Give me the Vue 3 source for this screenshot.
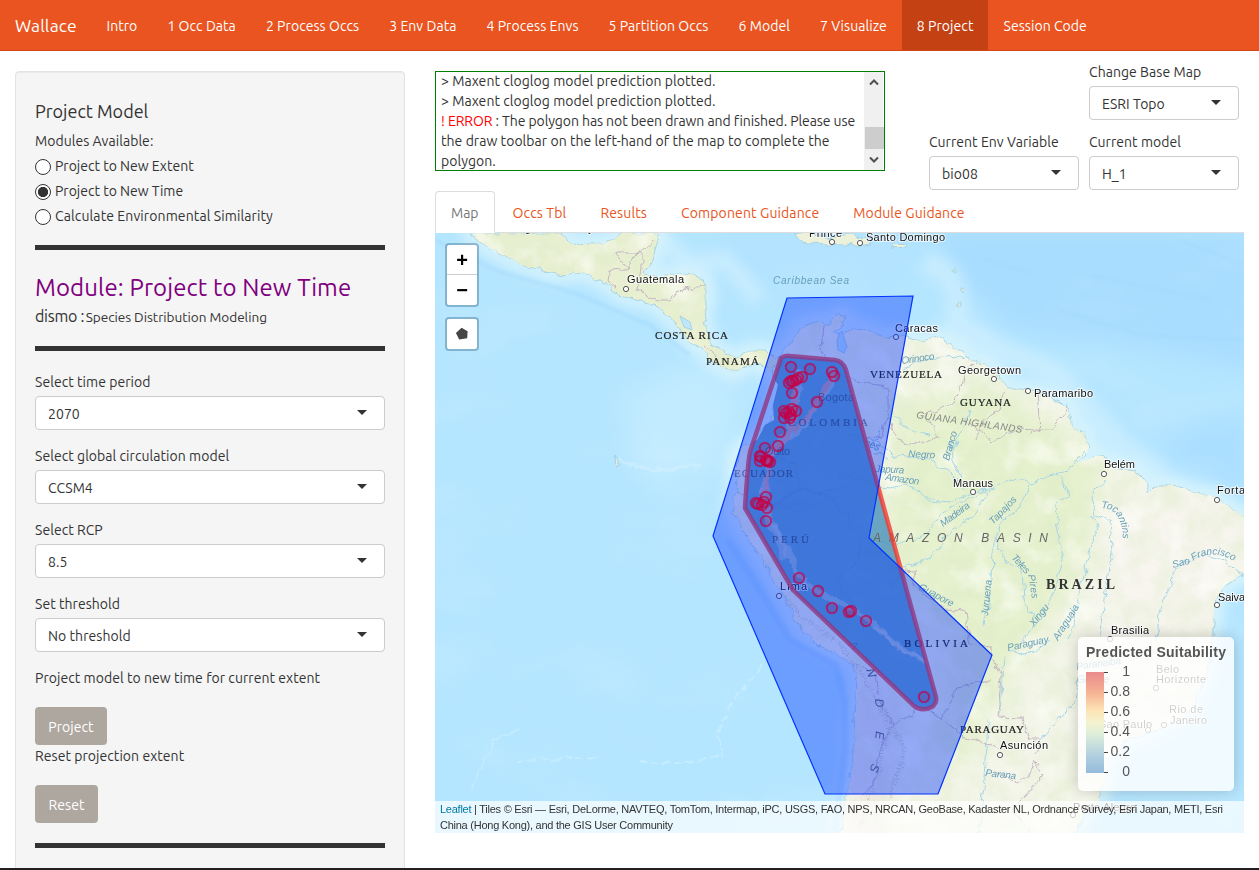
<script setup>
const navItems = ['Intro', '1 Occ Data', '2 Process Occs', '3 Env Data', '4 Process Envs', '5 Partition Occs', '6 Model', '7 Visualize', '8 Project', 'Session Code']
const modules = ['Project to New Extent', 'Project to New Time', 'Calculate Environmental Similarity']
const fields = [
  { label: 'Select time period', value: '2070' },
  { label: 'Select global circulation model', value: 'CCSM4' },
  { label: 'Select RCP', value: '8.5' },
  { label: 'Set threshold', value: 'No threshold' },
]
const tabs = ['Map', 'Occs Tbl', 'Results', 'Component Guidance', 'Module Guidance']
const legend = ['1', '0.8', '0.6', '0.4', '0.2', '0']

const northLand = 'M470 233L482 243L495 252L520 264L545 272L565 275L573 271L590 275L608 285L620 295L640 301L655 304L662 311L676 323L683 333L690 343L702 348L708 358L722 368L735 374L742 368L755 362L765 366L772 375L781 355L775 360L765 350L752 350L735 357L722 352L712 345L707 338L705 325L703 315L707 300L707 284L695 275L680 274L665 275L650 277L645 272L652 260L658 240L659 233L620 233L612 240L600 243L580 245L566 240L562 233Z'
const southLand = 'M781 355L790 345L796 335L800 328L815 322L828 324L838 316L845 316L843 322L833 331L840 336L855 327L870 331L885 337L900 336L915 341L940 338L953 348L963 352L965 358L985 364L1003 381L1008 388L1030 390L1050 397L1070 410L1072 425L1087 436L1089 450L1076 463L1098 455L1120 468L1135 470L1148 485L1147 495L1155 487L1170 484L1190 491L1215 496L1233 510L1250 518L1250 570L1225 585L1215 600L1212 633L1210 665L1200 690L1190 710L1175 722L1150 732L1125 742L1105 765L1105 780L1098 800L1085 815L1070 840L840 840L845 800L852 770L855 720L857 680L853 665L838 655L815 642L800 630L790 610L780 590L765 565L753 545L740 525L733 510L733 500L738 490L735 470L737 455L745 445L757 440L765 425L774 420L773 405L778 385L772 375Z'
const hull = 'M781 358Q785 355 790 356L835 360Q843 361 846 370L936 697Q937 703 932 707Q922 712 914 706L793 590L745 508Q748 460 750 452Z'
const area = 'M787 298L913 296L869 538L992 655L938 794L825 794L713 536Z'

const rivers = [
  'M876 485L890 488L905 484L918 490L930 500L950 502L973 492L995 488L1015 480L1032 484L1050 476L1065 472L1075 463L1085 450',
  'M870 437L895 455L925 458L944 468L955 478L965 490', 'M952 440L953 462L960 478',
  'M890 460L870 450L888 415', 'M913 542L930 530L940 515L962 502L988 489', 'M895 570L922 562L940 548L945 535L975 515L990 490',
  'M1029 486L1018 510L1000 525L993 548L992 580L988 605L985 624', 'M996 540L1005 560L1022 572L1024 600L1036 622',
  'M1062 475L1068 495L1056 505L1058 530L1063 560L1055 590L1040 620L1020 645', 'M1092 515L1099 525L1088 560L1078 600L1069 640',
  'M1105 478L1092 495L1095 515L1110 520L1112 545L1106 590L1100 640', 'M1243 576L1222 559L1205 555L1180 565L1165 595L1155 640',
  'M1008 650L1020 655L1035 650L1050 641', 'M1080 676L1075 700L1052 728L1038 744', 'M988 720L985 780L978 833',
  'M902 368L930 360L950 355L963 360', 'M890 410L905 427L930 435', 'M970 410L963 430L952 450', 'M1004 657L1002 680L1000 715',
  'M870 538L890 545L905 542', 'M848 433L872 441L882 456', 'M795 490L820 493L850 486', 'M770 502L795 512L820 500'
]
const borders = [
  'M609 271L625 270L638 252L642 252L642 270L637 288L650 297L659 300L669 300L680 290L695 287L707 284', 'M609 271L608 282L615 288', 'M615 252L640 252M615 252L628 268M640 252L650 245L652 240',
  'M706 348L714 352L718 358', 'M783 355L778 367L780 373', 'M825 325L820 350L845 377L862 383L888 388L888 410L883 435L860 440',
  'M889 415L898 440L915 445L938 435L925 415L950 405L958 395L965 372L975 362', 'M1005 390L1000 410L985 420L975 440', 'M1037 393L1040 430L1030 432', 'M1068 409L1050 430L1020 428L990 443L970 420',
  'M755 447L795 465L800 485', 'M738 493L760 510L780 502L800 488L830 497L845 515L862 540L855 565L835 580L852 600L865 630', 'M904 569L914 570L915 585L945 610L965 612L970 645L992 646L992 655L1001 675L998 717L1022 718L1030 740L1040 740L1036 755',
  'M857 665L876 675L882 710L892 724L925 707L942 718L957 687L990 681', 'M942 718L963 737L990 745L1000 752M997 773L1016 783L1030 775L1035 760L1044 775L1020 800L1012 810L1030 833',
  'M892 724L887 738L877 763L873 785L864 795'
]
const cities = [
  ['Guatemala', 627, 283, 57, 626, 289], ['Santo Domingo', 866, 241, 79, 860, 243], ['Prince', 809, 237, 33, 832, 242],
  ['Caracas', 895, 332, 43, 896, 337], ['Georgetown', 958, 374, 63, 994, 379], ['Paramaribo', 1034, 397, 59, 1028, 391],
  ['Belém', 1104, 468, 31, 1104, 474], ['Manaus', 953, 487, 40, 973, 492], ['Forta', 1217, 494, 28, 1217, 500],
  ['Salva', 1218, 601, 27, 1217, 605], ['Brasilia', 1111, 634, 38, 1110, 639], ['Asunción', 1000, 749, 48, 1000, 755],
  ['Lima', 780, 590, 27, 779, 596], ['Belo', 1156, 673, 23, 1156, 688], ['Horizonte', 1156, 683, 50, 1156, 688],
  ['Rio de', 1169, 713, 34, 1164, 725], ['Janeiro', 1170, 724, 37, 1164, 725], ['Sao Paulo', 1099, 728, 53, 1148, 730],
  ['Porto Alegre', 1073, 811, 63, 1073, 815]
]
const countries = [
  ['COSTA RICA', 655, 339, 73], ['PANAMÁ', 706, 365, 53], ['VENEZUELA', 870, 378, 72], ['GUYANA', 960, 406, 51], ['COLOMBIA', 788, 426, 80],
  ['ECUADOR', 734, 477, 59], ['PERÚ', 772, 543, 37], ['BOLIVIA', 904, 647, 64], ['PARAGUAY', 960, 733, 64]
]
const waters = [
  ['Caribbean Sea', 773, 284, 76, 0], ['Orinoco', 902, 364, 33, -8], ['Negro', 908, 457, 27, 3], ['Japura', 875, 472, 29, 3], ['Amazon', 885, 480, 34, 8],
  ['Madeira', 943, 527, 34, -36], ['Tapajos', 993, 525, 35, -46], ['Branco', 949, 461, 30, -74], ['Teles', 1011, 558, 22, 48], ['Pires', 1028, 575, 24, 80], ['Juruena', 988, 616, 36, -84],
  ['Xingu', 1034, 627, 25, -52], ['Araguaia', 1058, 641, 40, -58], ['Sao', 1173, 568, 18, -14],
  ['Guapore', 918, 589, 38, 28], ['Purus', 857, 556, 25, -4], ['Beni', 892, 589, 22, -48], ['Marañon', 775, 510, 34, -8], ['Vaupes', 847, 438, 34, 22], ['Putumayo', 837, 476, 43, 14],
  ['Parana', 985, 776, 31, 6], ['Paraguay', 1008, 651, 42, -12], ['Paranaiba', 1077, 670, 45, -8], ['Grande', 1077, 683, 32, 0]
]
const occs = [
  [791, 367], [810, 369], [832, 372], [834, 376], [789, 383], [793, 381], [796, 380], [802, 377], [798, 378], [791, 381], [792, 393], [817, 402],
  [784, 411], [786, 413], [791, 415], [796, 411], [789, 412], [792, 409], [784, 418], [790, 418], [780, 432], [765, 448], [778, 446], [760, 456], [761, 457], [766, 460], [767, 461], [768, 461],
  [760, 461], [770, 462], [766, 497], [756, 503], [758, 504], [762, 505], [767, 508], [764, 502], [766, 521], [799, 578], [818, 591], [832, 608], [849, 612], [851, 611], [866, 621], [924, 697]
]
</script>

<template>
  <div class="page">
    <nav class="navbar">
      <span class="brand">Wallace</span>
      <a v-for="n in navItems" :key="n" :class="['nav-link', { active: n === '8 Project' }]">{{ n }}</a>
    </nav>
    <div class="body">
      <aside class="well">
        <h4>Project Model</h4>
        <div class="avail">Modules Available:</div>
        <div v-for="(m, i) in modules" :key="m" class="radio">
          <span :class="['dot', { on: i === 1 }]"></span><span :class="{ wide: i === 2 }">{{ m }}</span>
        </div>
        <hr class="hr1">
        <h3>Module: Project to New Time</h3>
        <div class="pkg"><span>dismo :</span> <small>Species Distribution Modeling</small></div>
        <hr class="hr2">
        <div v-for="f in fields" :key="f.label" class="field">
          <label>{{ f.label }}</label>
          <div class="select"><span>{{ f.value }}</span><i></i></div>
        </div>
        <div class="help">Project model to new time for current extent</div>
        <button class="b1">Project</button>
        <div class="help2">Reset projection extent</div>
        <button class="b2">Reset</button>
        <hr class="hr3">
      </aside>

      <main>
        <div class="top">
          <div class="log">
            <div class="log-text">
              <p>&gt; Maxent cloglog model prediction plotted.</p>
              <p>&gt; Maxent cloglog model prediction plotted.</p>
              <p class="l3"><b>! ERROR</b> : The polygon has not been drawn and finished. Please use</p>
              <p>the draw toolbar on the left-hand of the map to complete the</p>
              <p>polygon.</p>
            </div>
            <div class="scroll">
              <svg width="10" height="8" viewBox="0 0 10 8"><path d="M1 6.5L5 2.5L9 6.5" /></svg>
              <div class="thumb"></div>
              <svg width="10" height="8" viewBox="0 0 10 8"><path d="M1 1.5L5 5.5L9 1.5" /></svg>
            </div>
          </div>
          <div class="pickers">
            <div class="field base"><label>Change Base Map</label><div class="select"><span>ESRI Topo</span><i></i></div></div>
            <div class="field"><label>Current Env Variable</label><div class="select"><span>bio08</span><i></i></div></div>
            <div class="field"><label>Current model</label><div class="select"><span>H_1</span><i></i></div></div>
          </div>
        </div>
        <div class="tabs">
          <a v-for="(t, i) in tabs" :key="t" :class="['tab', { current: i === 0 }]">{{ t }}</a>
        </div>
        <div class="map">
          <svg class="canvas" width="809" height="600" viewBox="435 233 809 600">
            <defs>
              <clipPath id="land"><path :d="northLand" /><path :d="southLand" /></clipPath>
              <clipPath id="sland"><path :d="southLand" /></clipPath>
              <clipPath id="hullclip"><path :d="hull" /></clipPath>
              <filter id="blur6" x="-20%" y="-20%" width="140%" height="140%"><feGaussianBlur stdDeviation="6" /></filter>
              <filter id="blur2" x="-20%" y="-20%" width="140%" height="140%"><feGaussianBlur stdDeviation="1.4" /></filter>
              <filter id="blur14" x="-50%" y="-50%" width="200%" height="200%"><feGaussianBlur stdDeviation="13" /></filter>
              <filter id="green" x="0" y="0" width="100%" height="100%">
                <feTurbulence type="fractalNoise" baseFrequency="0.045" numOctaves="5" seed="7" />
                <feColorMatrix values="0 0 0 0 .7  0 0 0 0 .82  0 0 0 0 .55  2.8 0 0 0 -1.05" />
              </filter>
              <filter id="pale" x="0" y="0" width="100%" height="100%">
                <feTurbulence type="fractalNoise" baseFrequency="0.03" numOctaves="4" seed="23" />
                <feColorMatrix values="0 0 0 0 1  0 0 0 0 1  0 0 0 0 .97  3 0 0 0 -1.5" />
              </filter>
              <filter id="sea" x="0" y="0" width="100%" height="100%">
                <feTurbulence type="fractalNoise" baseFrequency="0.008 0.014" numOctaves="4" seed="12" />
                <feColorMatrix values="0 0 0 0 .85  0 0 0 0 .95  0 0 0 0 1  2 0 0 0 -1" />
              </filter>
              <filter id="rough" x="-5%" y="-5%" width="110%" height="110%">
                <feTurbulence type="fractalNoise" baseFrequency="0.09" numOctaves="3" seed="4" result="n" />
                <feDisplacementMap in="SourceGraphic" in2="n" scale="9" xChannelSelector="R" yChannelSelector="G" />
              </filter>
              <path id="tocantins" d="M1101 508Q1116 508 1120 522Q1125 533 1121 550" />
              <path id="francisco" d="M1193 561Q1213 548 1234 561" />
            </defs>
            <rect x="435" y="233" width="809" height="600" fill="#b5e6ff" />
            <g filter="url(#blur14)">
              <path d="M930 225L1260 225L1260 370L1130 345L1010 330L960 290Z" fill="#a9ddff" />
              <path d="M720 225L935 225L900 290L790 300L715 275Z" fill="#b2e3ff" />
              <path d="M620 400L700 360L740 400L720 470L650 480Z" fill="#c2ebff" />
              <path d="M1150 430L1250 410L1250 500L1180 470Z" fill="#abdfff" />
            </g>
            <rect x="435" y="233" width="809" height="600" filter="url(#sea)" opacity=".15" />
            <g fill="none" stroke="#d9f4fd" stroke-linejoin="round" filter="url(#blur6)">
              <path :d="northLand" stroke-width="18" opacity=".8" /><path :d="southLand" stroke-width="20" opacity=".85" />
              <path d="M925 260L950 275L958 300L957 325L1000 350L1050 370L1085 405L1125 450L1165 475" stroke-width="24" opacity=".5" />
              <path d="M655 233L690 265L725 260L760 300" stroke-width="20" opacity=".5" />
            </g>
            <g fill="none" stroke="#9bd3fa" opacity=".4" filter="url(#blur2)">
              <path d="M435 240L500 272L575 293L650 325L690 355" stroke-width="3" />
              <path d="M728 540L760 590L790 640L835 665L845 700L845 750L835 833" stroke-width="7" />
              <path d="M985 260L1030 272M1060 310L1140 335L1244 340M1090 275L1210 300M1180 240L1244 265" stroke-width="1.5" />
            </g>
            <g fill="none" stroke="#d6f2ff" opacity=".5" filter="url(#rough)">
              <path d="M620 460L650 470L700 465" stroke-width="3" />
              <path d="M762 665L735 700L718 730L722 755L690 762L640 762M515 760L600 757" stroke-width="2" stroke-dasharray="9 3" />
              <path d="M470 790L495 740L520 730" stroke-width="1.5" />
            </g>
            <g fill="#eef1d9" stroke="#9ccbe0" stroke-width=".8" filter="url(#rough)">
              <path :d="northLand" fill="#e9f0d2" /><path :d="southLand" fill="#f3f5e8" />
              <path d="M795 233L812 233L828 238L850 235L865 239L872 244L855 246L830 244L805 243ZM892 244L908 245L907 249L892 248Z" />
              <path d="M953 268h4v3h-4zM959 287h3v4h-3zM957 304h3v4h-3zM615 457l5 9-4 2z" fill="#e4ecd8" />
            </g>
            <g clip-path="url(#land)">
              <path d="M895 400L990 380L1100 460L1090 560L1010 680L960 770L930 740L960 650L880 560Z" fill="#e6f1ce" filter="url(#blur14)" />
              <path d="M1110 500L1250 500L1225 640L1140 720L1090 650Z" fill="#f7f5ee" filter="url(#blur14)" />
              <path d="M862 665L900 700L885 840L845 840Z" fill="#f0ebe4" filter="url(#blur6)" />
              <rect x="435" y="233" width="809" height="600" filter="url(#green)" opacity=".32" />
              <rect x="435" y="233" width="809" height="600" filter="url(#pale)" opacity=".55" />
              <path d="M757 560L795 610L840 645L866 680L890 730L872 790L860 830M880 700L905 750L890 800" fill="none" stroke="#b9b5a5" stroke-width="4" opacity=".5" stroke-dasharray="1 2" filter="url(#rough)" />
            </g>
            <path d="M839 334L842 331L847 347L844 353L838 350L837 341ZM680 316L690 322L692 330L684 327Z" fill="#bfe7fb" stroke="#92c7e4" stroke-width=".7" />
            <g fill="none" stroke="#a6d5e8" filter="url(#rough)"><path v-for="r in rivers" :key="r" :d="r" /></g>
            <g fill="none" stroke="#bba6bd" stroke-width=".8" filter="url(#rough)"><path v-for="b in borders" :key="b" :d="b" /></g>
            <g clip-path="url(#hullclip)">
              <g clip-path="url(#sland)">
                <path :d="hull" fill="#4c92bb" opacity=".82" />
                <g fill="none" stroke-linecap="round" stroke-linejoin="round" filter="url(#rough)">
                  <path d="M832 370L834 382L818 402L808 420L795 435L778 445L769 458L767 478L760 505L772 520L785 545L795 570L815 590L832 600L851 608L870 620L885 635L905 650L925 662" stroke="#b3c8d0" stroke-width="5" opacity=".65" />
                  <path d="M799 375L798 392L791 412L791 432L778 445L765 460M766 490L768 520L778 535L784 555" stroke="#b3c8d0" stroke-width="8" opacity=".6" />
                  <path d="M833 377L820 395L810 415L795 430M797 385L794 412L788 438L770 455L766 490" stroke="#d99b9c" stroke-width="5" opacity=".8" />
                  <path d="M875 628L900 648L924 660" stroke="#b9c9ce" stroke-width="3" opacity=".7" />
                </g>
              </g>
            </g>
            <g class="country"><text v-for="c in countries" :key="c[0]" :class="{ veiled: ['COLOMBIA', 'PERÚ', 'ECUADOR'].includes(c[0]) }" :x="c[1]" :y="c[2]" :textLength="c[3]">{{ c[0] }}</text></g>
            <text class="brazil" x="1046" y="589" textLength="69">BRAZIL</text>
            <g class="region">
              <text x="873" y="542" textLength="175">AMAZON BASIN</text>
              <text class="small" transform="translate(916 418) rotate(8)" textLength="107">GUIANA HIGHLANDS</text>
              <text class="veiled" transform="translate(848 645) rotate(48)">A</text><text transform="translate(866 670) rotate(72)">N</text>
              <text transform="translate(875 699) rotate(85)">D</text><text transform="translate(876 731) rotate(95)">E</text><text transform="translate(872 763) rotate(108)">S</text>
            </g>
            <g class="water">
              <text v-for="w in waters" :key="w[0]" :transform="`translate(${w[1]} ${w[2]}) rotate(${w[4]})`" :textLength="w[3]">{{ w[0] }}</text>
              <text><textPath href="#tocantins">Tocantins</textPath></text>
              <text><textPath href="#francisco">Francisco</textPath></text>
            </g>
            <g class="city">
              <text v-for="c in cities" :key="c[0]" :x="c[1]" :y="c[2]" :textLength="c[3]">{{ c[0] }}</text>
              <text class="under" x="765" y="455" textLength="25">Quito</text><text class="under" x="818" y="401" textLength="36">Bogota</text>
              <text x="525" y="232">g</text><text x="588" y="232">y</text>
            </g>
            <g fill="#fff" stroke="#555"><circle v-for="(c, i) in cities" :key="i" :cx="c[4]" :cy="c[5]" r="2.6" /></g>
            <path :d="hull" fill="none" stroke="#f03b30" stroke-width="4.5" stroke-linejoin="round" opacity=".8" />
            <path :d="area" fill="#0033ff" fill-opacity=".4" stroke="#0033ff" stroke-width="1.2" />
            <g fill="#d0003c" fill-opacity=".15" stroke="#c20048" stroke-width="2" stroke-opacity=".68"><circle v-for="(o, i) in occs" :key="i" :cx="o[0]" :cy="o[1]" r="5.2" /></g>
          </svg>
          <div class="controls">
            <div class="zoom"><span>+</span><span>−</span></div>
            <div class="draw"><svg width="14" height="14" viewBox="0 0 14 14"><path d="M6.6 .8L12.6 4.2L12.2 11.2L4.2 12.6L.9 6Z" fill="#464646" /></svg></div>
          </div>
          <div class="legend">
            <strong>Predicted Suitability</strong>
            <div class="scale">
              <div class="ramp"></div>
              <div class="ticks"><div v-for="l in legend" :key="l"><i></i><span>{{ l }}</span></div></div>
            </div>
          </div>
          <div class="credit"><a>Leaflet</a> | Tiles © Esri — Esri, DeLorme, NAVTEQ, TomTom, Intermap, iPC, USGS, FAO, NPS, NRCAN, GeoBase, Kadaster NL, Ordnance Survey, Esri Japan, METI, Esri<br>China (Hong Kong), and the GIS User Community</div>
        </div>
      </main>
    </div>
    <div class="taskbar"></div>
  </div>
</template>

<style>
body { margin: 0; overflow: hidden; background: #fff; }
</style>

<style scoped>
* { box-sizing: border-box; }
.page { width: 1259px; height: 870px; overflow: hidden; display: flex; flex-direction: column; font: 14px/20px "Ubuntu", "Noto Sans", sans-serif; color: #333; letter-spacing: 0.05px; }
.navbar { height: 51px; flex: none; display: flex; background: #e95420; border-bottom: 1px solid #d34615; color: #fff; line-height: 52px; letter-spacing: .06px; }
.brand { width: 91.5px; padding-left: 15px; font-size: 17.5px; letter-spacing: .15px; }
.nav-link { padding: 0 15px; height: 50px; white-space: nowrap; }
.nav-link.active { background: #c34113; }
.body { flex: 1; min-height: 0; display: flex; gap: 30px; padding: 20px 15px 0; }
.well { width: 390px; flex: none; height: 900px; padding: 19px; background: #f5f5f5; border: 1px solid #e3e3e3; border-radius: 4px; box-shadow: inset 0 1px 1px rgba(0,0,0,.05); }
h4 { margin: 10px 0 10px; font-weight: 400; font-size: 18px; line-height: 20px; letter-spacing: 0; }
.avail { margin-bottom: 3px; }
.radio { display: flex; align-items: center; height: 25px; gap: 4px; line-height: 18px; padding-bottom: 1px; letter-spacing: 0; }
.radio .wide { letter-spacing: .11px; }
.dot { width: 16px; height: 16px; border: 1px solid #333; border-radius: 50%; background: #fff; margin-top: 2px; }
.dot.on { background: radial-gradient(circle, #333 0 4.8px, #fff 5.4px); }
hr { height: 5px; border: 0; background: #333; margin: 0; }
.hr1 { margin-top: 16px; }
h3 { margin: 24px 0 0; font-weight: 400; font-size: 24px; line-height: 28px; color: purple; letter-spacing: .11px; }
.pkg { margin-top: 4px; line-height: 20px; height: 20px; font-size: 16px; letter-spacing: -.25px; }
.pkg small { font-size: 13.6px; margin-left: -2px; letter-spacing: -.03px; }
.hr2 { margin: 20px 0 21px; }
.field label { display: block; line-height: 20px; }
.well .field { height: 59px; margin-bottom: 15px; }
.select { margin-top: 4px; height: 34px; padding: 1px 17px 0 12px; display: flex; align-items: center; justify-content: space-between; background: #fff; border: 1px solid #ccc; border-radius: 4px; }
.select i { border: 5px solid transparent; border-top-color: #333; border-bottom: 0; margin-top: -3px; }
.help { margin: 0 0 19px; }
button { display: block; height: 38px; padding: 2px 0 0; border: 0; border-radius: 4px; background: #aea79f; color: #fff; font: inherit; letter-spacing: inherit; }
.b1 { width: 72px; } .b2 { width: 63px; }
.help2 { margin: 1px 0 19px; }
.hr3 { margin-top: 20px; }
main { width: 809px; }
.top { height: 120px; display: flex; justify-content: space-between; }
.log { width: 450px; height: 100px; border: 1px solid green; display: flex; justify-content: space-between; overflow: hidden; }
.log-text { padding-left: 5px; white-space: nowrap; margin-top: -1px; }
.log p { margin: 0; line-height: 20px; }
.log .l3 { letter-spacing: -.08px; }
.log b { font-weight: 400; color: red; }
.scroll { width: 20px; padding: 6px 5px 6px; background: linear-gradient(90deg, #f0f0f0 19px, #fff 19px); display: flex; flex-direction: column; align-items: center; justify-content: space-between; }
.scroll path { fill: none; stroke: #505050; stroke-width: 2; }
.thumb { width: 19px; height: 22px; background: #cdcdcd; margin-top: 34px; }
.pickers { width: 310px; height: 129px; margin: -9px 5px 0 0; display: grid; grid-template-columns: 150px 150px; grid-auto-rows: 59px; gap: 11px 10px; }
.pickers .select { padding-top: 2px; }
.base { grid-column: 2; }
.tabs { height: 42px; display: flex; border-bottom: 1px solid #ddd; color: #e95420; line-height: 22px; letter-spacing: .13px; }
.tab { padding: 10px 15px; border: 1px solid transparent; margin-right: 2px; height: 42px; white-space: nowrap; }
.tab.current { color: #777; border-color: #ddd #ddd #fff; background: #fff; border-radius: 4px 4px 0 0; letter-spacing: 0; }
.map { position: relative; width: 809px; height: 600px; overflow: hidden; letter-spacing: 0; }
.canvas { display: block; }
text { font-family: "Liberation Sans", sans-serif; }
.country text { font: 11px "Liberation Serif", serif; fill: #222; stroke: #222; stroke-width: .2px; }
.country .veiled, .region .veiled { opacity: .55; }
.brazil { font: bold 14px "Liberation Serif", serif; fill: #333; }
.region text { font-style: italic; font-size: 12px; fill: #666; }
.region .small { font-size: 10px; fill: #888; }
.water text { font-style: italic; font-size: 10px; fill: #689fb9; }
.city text { font-size: 11px; fill: #111; paint-order: stroke; stroke: #fff; stroke-width: 2px; stroke-opacity: .7; }
.city .under { stroke: none; opacity: .45; }
.controls { position: absolute; left: 10px; top: 10px; display: grid; gap: 10px; }
.zoom, .draw { width: 34px; border: 2px solid rgba(60,110,140,.42); background: #fff; background-clip: padding-box; border-radius: 4px; }
.zoom { height: 64px; font: bold 20px/30px "Liberation Sans", sans-serif; color: #000; text-align: center; }
.zoom span { display: block; height: 30px; }
.zoom span:first-child { border-bottom: 1px solid #ccc; }
.draw { height: 34px; display: grid; place-items: center; }
.legend { position: absolute; right: 10px; top: 404px; width: 156px; height: 154px; padding: 6px 8px; border-radius: 5px; background: rgba(255,255,255,.8); box-shadow: 0 0 15px rgba(0,0,0,.2); font: 14px/18px "Liberation Sans", sans-serif; color: #555; }
.legend strong { display: block; white-space: nowrap; font-size: 14px; letter-spacing: .27px; }
.scale { display: flex; margin-top: 1px; }
.ramp { width: 18px; height: 101px; margin-top: 10px; background: linear-gradient(#e98a8c, #f6b293 20%, #fde3b5 38%, #f5f3cf 50%, #dcedda 62%, #b2d1df 82%, #95badb); }
.ticks div { width: 26px; height: 20px; display: flex; align-items: center; justify-content: flex-end; position: relative; }
.ticks span { margin-top: -3px; }
.ticks i { position: absolute; left: 0; top: 10px; width: 4px; height: 1px; background: #444; }
.credit { position: absolute; left: 0; right: 0; bottom: 0; height: 32px; padding-left: 5px; background: rgba(255,255,255,.7); font: 11px/16px "Liberation Sans", sans-serif; color: #333; white-space: nowrap; letter-spacing: -.25px; }
.credit a { color: #0078a8; }
.taskbar { height: 2px; flex: none; background: #231f20; }
</style>
